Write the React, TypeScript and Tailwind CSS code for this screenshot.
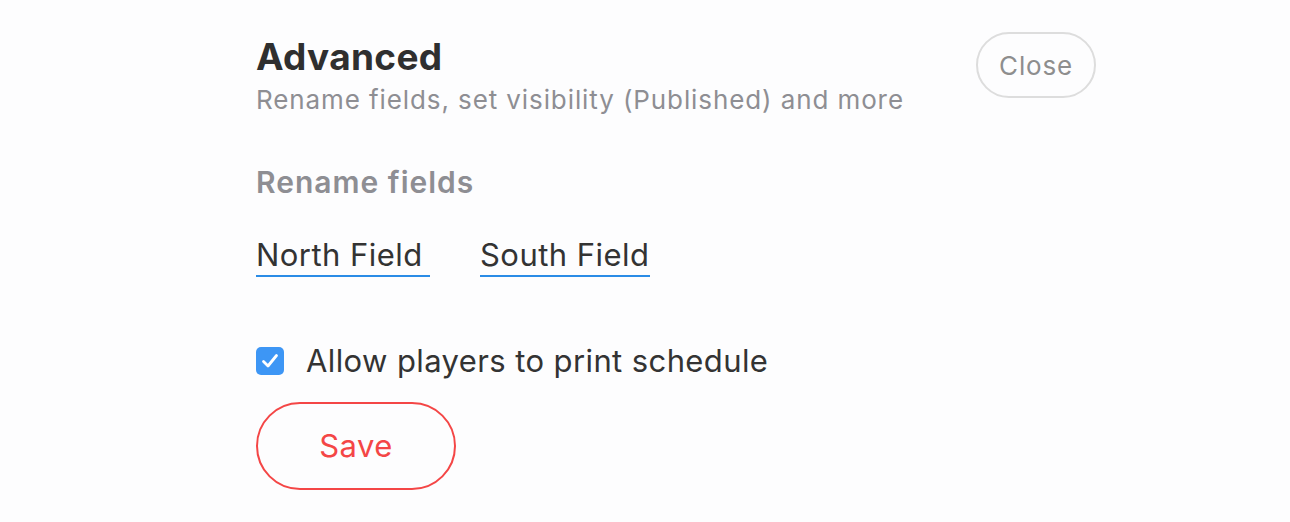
import React from "react";

export default function App() {
  return (
    <div
      className="w-[1290px] h-[522px] bg-[#fdfdfe] text-[#333333] overflow-hidden"
      style={{ fontFamily: "Inter, 'Noto Sans', sans-serif" }}
    >
      <div className="pl-[256px] pr-[194px] pt-[32px] flex flex-col">
        <div className="flex justify-between items-start">
          <div className="flex flex-col">
            <h1 className="text-[37px] leading-[48px] font-bold tracking-[0.3px] text-[#2f2f2f] mt-[1px]">Advanced</h1>
            <p className="text-[26px] leading-[32px] tracking-[0.9px] text-[#8e8e93] mt-[3px]">
              Rename fields, set visibility (Published) and more
            </p>
          </div>
          <button className="w-[120px] h-[66px] rounded-full border-2 border-[#dddddd] text-[26px] tracking-[0.8px] text-[#8e8e8e] bg-transparent">
            Close
          </button>
        </div>
        <h2 className="text-[30px] leading-[38px] font-semibold tracking-[1px] text-[#8e8e93] mt-[47px]">Rename fields</h2>
        <div className="flex gap-[50px] mt-[32px]">
          <div className="w-[174px] border-b-2 border-[#2b8ce6] text-[31px] leading-[40px] pt-[2px] tracking-[0.45px] text-[#333]">North Field</div>
          <div className="w-[170px] border-b-2 border-[#2b8ce6] text-[31px] leading-[40px] pt-[2px] tracking-[0.45px] text-[#333]">South Field</div>
        </div>
        <label className="flex items-center gap-[22px] mt-[65px]">
          <span className="w-[28px] h-[28px] shrink-0 rounded-[5px] bg-[#3d96f5] flex items-center justify-center">
            <svg className="w-[28px] h-[28px] shrink-0" viewBox="0 0 28 28" fill="none">
              <path d="M7.5 14.5 L12 19 L20.5 8.5" stroke="#ffffff" strokeWidth="2.8" strokeLinecap="round" strokeLinejoin="round" />
            </svg>
          </span>
          <span className="text-[31px] leading-[38px] tracking-[0.4px] text-[#333]">Allow players to print schedule</span>
        </label>
        <div className="mt-[22px]">
          <button className="w-[200px] h-[88px] rounded-full border-2 border-[#f44646] text-[31px] tracking-[0.4px] text-[#f44646] bg-transparent">
            Save
          </button>
        </div>
      </div>
    </div>
  );
}
